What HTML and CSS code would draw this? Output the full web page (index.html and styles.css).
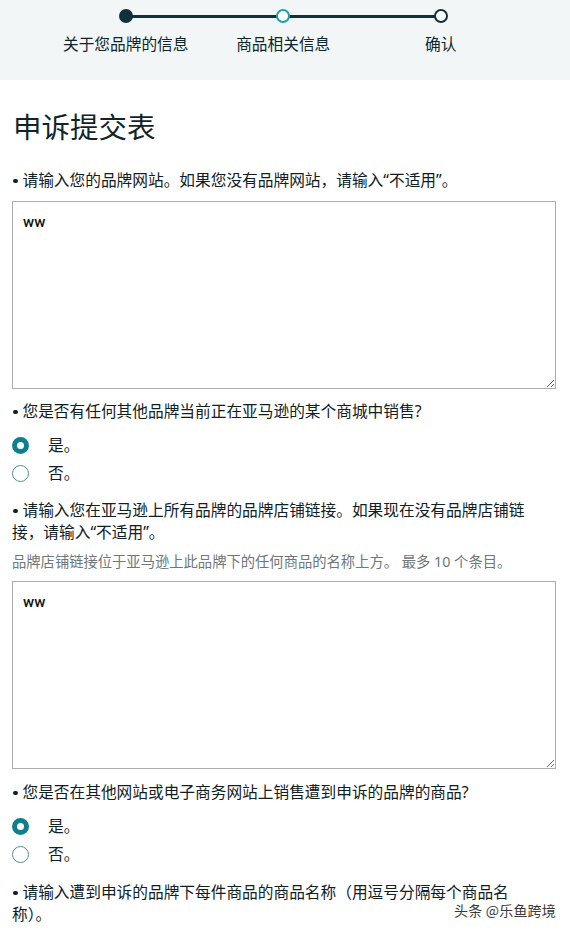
FILE: index.html
```html
<!DOCTYPE html>
<html lang="zh-CN">
<head>
<meta charset="utf-8">
<title>申诉提交表</title>
<link rel="stylesheet" href="styles.css">
</head>
<body>
<header class="progress">
  <ol class="steps">
    <li class="step done"><span class="dot"></span><span class="step-label">关于您品牌的信息</span></li>
    <li class="step current"><span class="dot"></span><span class="step-label">商品相关信息</span></li>
    <li class="step todo"><span class="dot"></span><span class="step-label">确认</span></li>
  </ol>
</header>
<main class="form">
  <h1 class="title">申诉提交表</h1>

  <p class="question q-first"><span class="bullet"></span>请输入您的品牌网站。如果您没有品牌网站，请输入“不适用”。</p>
  <textarea class="field">ww</textarea>

  <p class="question q-after-field"><span class="bullet"></span>您是否有任何其他品牌当前正在亚马逊的某个商城中销售?</p>
  <div class="radios">
    <label class="radio-row"><span class="radio checked"></span><span class="radio-text">是。</span></label>
    <label class="radio-row"><span class="radio"></span><span class="radio-text">否。</span></label>
  </div>

  <p class="question q-after-radios"><span class="bullet"></span>请输入您在亚马逊上所有品牌的品牌店铺链接。如果现在没有品牌店铺链接，请输入“不适用”。</p>
  <p class="hint">品牌店铺链接位于亚马逊上此品牌下的任何商品的名称上方。 最多 10 个条目。</p>
  <textarea class="field field-hinted">ww</textarea>

  <p class="question q-after-field2"><span class="bullet"></span>您是否在其他网站或电子商务网站上销售遭到申诉的品牌的商品?</p>
  <div class="radios">
    <label class="radio-row"><span class="radio checked"></span><span class="radio-text">是。</span></label>
    <label class="radio-row"><span class="radio"></span><span class="radio-text">否。</span></label>
  </div>

  <p class="question q-after-radios q-last"><span class="bullet"></span>请输入遭到申诉的品牌下每件商品的商品名称（用逗号分隔每个商品名称）。</p>
</main>
<div class="watermark">头条 @乐鱼跨境</div>
</body>
</html>
```

FILE: styles.css
```css
html, body {
  margin: 0;
  padding: 0;
  background: #ffffff;
}
body {
  font-family: "Noto Sans", "Noto Sans CJK SC", sans-serif;
  color: #142a30;
  width: 570px;
  height: 931px;
  overflow: hidden;
  position: relative;
}

/* progress header */
.progress {
  background: #f3f6f7;
  height: 80px;
  box-sizing: border-box;
}
.steps {
  list-style: none;
  margin: 0;
  padding: 0 0 0 47px;
  display: grid;
  grid-template-columns: repeat(3, 157.5px);
}
.step {
  position: relative;
  display: flex;
  flex-direction: column;
  align-items: center;
}
.step:not(:last-child)::after {
  content: "";
  position: absolute;
  top: 15px;
  left: 50%;
  width: 100%;
  height: 2.5px;
  background: #12303a;
  z-index: 0;
}
.dot {
  position: relative;
  z-index: 1;
  box-sizing: border-box;
  width: 14px;
  height: 14px;
  margin-top: 9px;
  border-radius: 50%;
  background: #ffffff;
}
.done .dot {
  background: #12303a;
}
.current .dot {
  border: 2.5px solid #1aa3ae;
}
.todo .dot {
  border: 2.5px solid #12303a;
}
.step-label {
  margin-top: 10px;
  font-size: 15.7px;
  line-height: 22px;
  white-space: nowrap;
  color: #10252a;
}

/* form */
.form {
  padding: 0 14px 0 12px;
}
.title {
  margin: 29px 0 0 1px;
  font-size: 28.5px;
  line-height: 36px;
  font-weight: 400;
  color: #10252a;
}
.question {
  margin: 0;
  max-width: 530px;
  width: fit-content;
  font-size: 15.7px;
  line-height: 22px;
  color: #0f2025;
}
.bullet {
  display: inline-block;
  width: 4.5px;
  height: 4.5px;
  border-radius: 50%;
  background: #0f2025;
  vertical-align: middle;
  margin: 0 5px 2px 1px;
}
.q-first { margin-top: 24px; }
.q-after-field { margin-top: 11px; }
.q-after-field2 { margin-top: 12px; }
.q-after-radios { margin-top: 12px; }
.q-last { margin-top: 13px; }

.field {
  display: block;
  box-sizing: border-box;
  width: 544px;
  height: 188px;
  margin: 10px 0 0 0;
  padding: 9px 10px;
  border: 1px solid #a9adaf;
  border-radius: 0;
  background: #ffffff;
  font-family: Roboto, "Noto Sans", sans-serif;
  font-size: 15px;
  font-weight: 500;
  line-height: 22px;
  color: #111111;
  resize: both;
  outline: none;
}
.field-hinted { margin-top: 8px; }

.hint {
  margin: 8px 0 0 0;
  font-size: 14.3px;
  line-height: 22px;
  color: #6e7779;
}

.radios {
  margin-top: 9px;
  display: flex;
  flex-direction: column;
}
.radio-row {
  display: flex;
  align-items: center;
  height: 28px;
}
.radio {
  box-sizing: border-box;
  width: 17px;
  height: 17px;
  margin-left: 0;
  border-radius: 50%;
  border: 1.5px solid #4f8e99;
  background: #ffffff;
}
.radio.checked {
  border: 5px solid #0d7f8d;
}
.radio-text {
  margin-left: 19px;
  font-size: 15.7px;
  line-height: 22px;
  color: #0f2025;
}

.watermark {
  position: absolute;
  right: 14px;
  bottom: 11px;
  font-family: "Noto Sans CJK SC", sans-serif;
  font-size: 14px;
  line-height: 20px;
  color: #3a3a3a;
  text-shadow: 0 0 2px #ffffff, 0 0 2px #ffffff;
  letter-spacing: 0.2px;
}
```
